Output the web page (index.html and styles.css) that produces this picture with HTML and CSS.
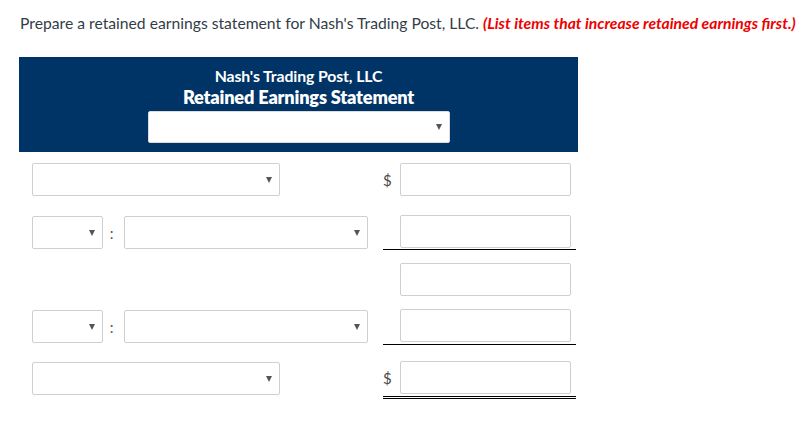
FILE: index.html
```html
<!DOCTYPE html>
<html lang="en">
<head>
<meta charset="utf-8">
<title>Retained Earnings Statement</title>
<link rel="stylesheet" href="styles.css">
</head>
<body>
<p class="prompt">Prepare a retained earnings statement for Nash's Trading Post, LLC. <em class="hint">(List items that increase retained earnings first.)</em></p>

<div class="statement">
  <div class="head">
    <div class="company">Nash's Trading Post, LLC</div>
    <div class="title">Retained Earnings Statement</div>
    <div class="sel sel-head">
      <select><option></option></select>
      <svg class="caret" viewBox="0 0 6 6" width="6" height="6"><path d="M0 0H6L3 6Z"/></svg>
    </div>
  </div>

  <div class="rows">
    <div class="row row1">
      <div class="left">
        <div class="sel sel-wide">
          <select><option></option></select>
          <svg class="caret" viewBox="0 0 6 6" width="6" height="6"><path d="M0 0H6L3 6Z"/></svg>
        </div>
      </div>
      <div class="amount"><span class="cur">$</span><input type="text"></div>
    </div>

    <div class="row row2">
      <div class="left off1">
        <div class="sel sel-small">
          <select><option></option></select>
          <svg class="caret" viewBox="0 0 6 6" width="6" height="6"><path d="M0 0H6L3 6Z"/></svg>
        </div>
        <span class="colon">:</span>
        <div class="sel sel-mid">
          <select><option></option></select>
          <svg class="caret" viewBox="0 0 6 6" width="6" height="6"><path d="M0 0H6L3 6Z"/></svg>
        </div>
      </div>
      <div class="amount line1"><span class="cur"></span><input type="text"></div>
    </div>

    <div class="row row3">
      <div class="left"></div>
      <div class="amount"><span class="cur"></span><input type="text"></div>
    </div>

    <div class="row row4">
      <div class="left off1">
        <div class="sel sel-small">
          <select><option></option></select>
          <svg class="caret" viewBox="0 0 6 6" width="6" height="6"><path d="M0 0H6L3 6Z"/></svg>
        </div>
        <span class="colon">:</span>
        <div class="sel sel-mid">
          <select><option></option></select>
          <svg class="caret" viewBox="0 0 6 6" width="6" height="6"><path d="M0 0H6L3 6Z"/></svg>
        </div>
      </div>
      <div class="amount line2"><span class="cur"></span><input type="text"></div>
    </div>

    <div class="row row5">
      <div class="left off1">
        <div class="sel sel-wide">
          <select><option></option></select>
          <svg class="caret" viewBox="0 0 6 6" width="6" height="6"><path d="M0 0H6L3 6Z"/></svg>
        </div>
      </div>
      <div class="amount dbl"><span class="cur">$</span><input type="text"></div>
    </div>
  </div>
</div>
</body>
</html>
```

FILE: styles.css
```css
* { box-sizing: border-box; }

body {
  margin: 0;
  background: #fff;
  font-family: Lato, "Open Sans", "Liberation Sans", sans-serif;
  color: #333d47;
}

.prompt {
  margin: 0;
  padding: 13px 0 0 20px;
  font-size: 15.7px;
  line-height: 21px;
  white-space: nowrap;
}

.hint {
  color: #ee0000;
  font-weight: 700;
  font-style: italic;
}

.statement {
  margin: 23px 0 0 19px;
  width: 559px;
}

.head {
  background: #003466;
  color: #fff;
  text-align: center;
  padding: 9px 0 9px;
}

.company {
  font-size: 15.8px;
  font-weight: 700;
  line-height: 20px;
  letter-spacing: -0.1px;
}

.title {
  font-size: 18.2px;
  font-weight: 800;
  line-height: 22px;
  letter-spacing: -0.2px;
}

.sel {
  position: relative;
  height: 33px;
}

.sel select {
  -webkit-appearance: none;
  appearance: none;
  display: block;
  width: 100%;
  height: 100%;
  margin: 0;
  background: #fff;
  border: 1px solid #cfcfcf;
  border-radius: 2px;
  font-family: inherit;
  font-size: 14px;
}

.caret {
  position: absolute;
  top: 14px;
  right: 8px;
  fill: #555;
}

.sel-head {
  width: 302px;
  height: 32px;
  margin: 3px auto 0;
}

.sel-head select { border-color: #dcdcdc; }
.sel-head .caret { right: 8px; top: 13px; }

.sel-wide { width: 248px; }
.sel-small { width: 71px; }
.sel-mid { width: 244px; }

.rows {
  padding: 0 2px 0 13px;
}

.row {
  display: grid;
  grid-template-columns: 351px 193px;
  align-items: start;
}

.row1 { margin-top: 11px; }
.row2 { margin-top: 19px; }
.row3 { margin-top: 13px; }
.row4 { margin-top: 13px; }
.row5 { margin-top: 16px; }

.left {
  display: flex;
  align-items: center;
}

.off1 { margin-top: 1px; }

.colon {
  width: 21px;
  padding-right: 4px;
  text-align: center;
  font-size: 15px;
  color: #555;
  line-height: 30px;
}

.amount {
  display: flex;
  align-items: center;
  padding-right: 5px;
}

.cur {
  width: 17px;
  font-size: 15px;
  color: #4a4a4a;
}

.amount input {
  width: 171px;
  height: 33px;
  margin: 0;
  border: 1px solid #cfcfcf;
  border-radius: 2px;
  background: #fff;
  font-family: inherit;
  font-size: 14px;
}

.line1 {
  padding-bottom: 1px;
  border-bottom: 1px solid #000;
}

.line2 {
  padding-bottom: 2px;
  border-bottom: 1px solid #000;
}

.dbl {
  padding-bottom: 2px;
  border-bottom: 3px double #000;
}
```
